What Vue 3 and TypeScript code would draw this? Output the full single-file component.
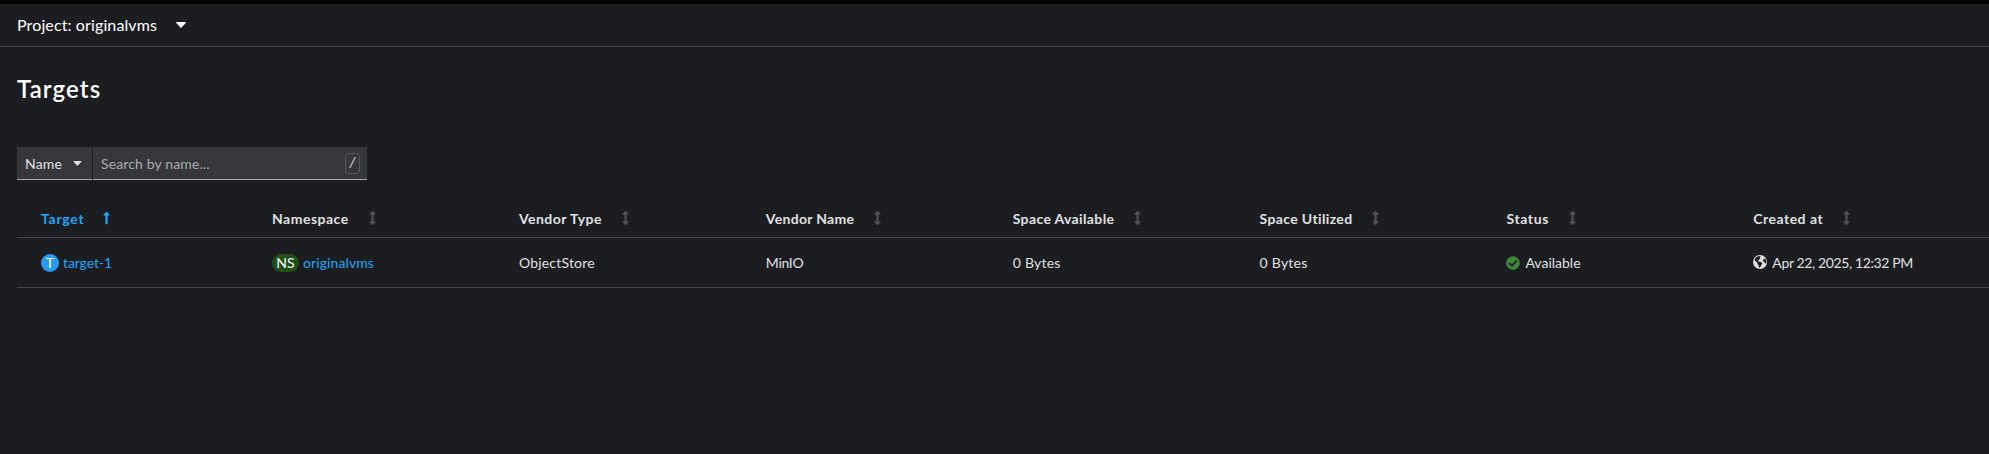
<script setup lang="ts">
interface Column {
  key: string
  label: string
  sorted?: boolean
}

const columns: Column[] = [
  { key: 'target', label: 'Target', sorted: true },
  { key: 'namespace', label: 'Namespace' },
  { key: 'vendor-type', label: 'Vendor Type' },
  { key: 'vendor-name', label: 'Vendor Name' },
  { key: 'available', label: 'Space Available' },
  { key: 'utilized', label: 'Space Utilized' },
  { key: 'status', label: 'Status' },
  { key: 'created', label: 'Created at' },
]

const targets = [
  {
    name: 'target-1',
    namespace: 'originalvms',
    vendorType: 'ObjectStore',
    vendorName: 'MinIO',
    available: '0 Bytes',
    utilized: '0 Bytes',
    status: 'Available',
    created: 'Apr 22, 2025, 12:32 PM',
  },
]

const arrowUp =
  'M88 166.059V468c0 6.627 5.373 12 12 12h56c6.627 0 12-5.373 12-12V166.059h46.059c21.382 0 32.09-25.851 16.971-40.971l-86.059-86.059c-9.373-9.373-24.569-9.373-33.941 0l-86.059 86.059c-15.119 15.119-4.411 40.971 16.971 40.971H88z'
const arrowBoth =
  'M214.059 377.941H168V134.059h46.059c21.382 0 32.09-25.851 16.971-40.971L144.971 7.029c-9.373-9.373-24.568-9.373-33.941 0L24.971 93.088c-15.119 15.119-4.411 40.971 16.971 40.971H88v243.882H41.941c-21.382 0-32.09 25.851-16.971 40.971l86.059 86.059c9.373 9.373 24.568 9.373 33.941 0l86.059-86.059c15.12-15.119 4.412-40.971-16.97-40.971z'
</script>

<template>
  <div class="page">
    <header class="project-bar">
      <button class="project" type="button">
        <span class="project-label">Project: originalvms</span>
        <svg class="caret" viewBox="0 0 10 6"><path d="M.7 0h8.6q.9.2.4 1L5.6 5.4q-.6.5-1.2 0L.3 1Q-.2.2.7 0z" /></svg>
      </button>
    </header>
    <h1 class="title">Targets</h1>
    <div class="toolbar">
      <button class="filter" type="button">
        <span class="filter-label">Name</span>
        <svg class="caret small" viewBox="0 0 10 6"><path d="M.7 0h8.6q.9.2.4 1L5.6 5.4q-.6.5-1.2 0L.3 1Q-.2.2.7 0z" /></svg>
      </button>
      <div class="search">
        <span class="placeholder">Search by name...</span>
        <kbd class="key">/</kbd>
      </div>
    </div>
    <div class="table">
      <div class="row head">
        <div v-for="c in columns" :key="c.key" class="cell" :class="{ sorted: c.sorted }">
          <span :class="'h-' + c.key">{{ c.label }}</span>
          <svg class="sort" viewBox="0 0 256 512"><path :d="c.sorted ? arrowUp : arrowBoth" /></svg>
        </div>
      </div>
      <div v-for="t in targets" :key="t.name" class="row body">
        <div class="cell"><span class="badge target">T</span><a class="link name">{{ t.name }}</a></div>
        <div class="cell"><span class="badge ns">NS</span><a class="link">{{ t.namespace }}</a></div>
        <div class="cell"><span class="type">{{ t.vendorType }}</span></div>
        <div class="cell"><span class="vendor">{{ t.vendorName }}</span></div>
        <div class="cell"><span class="bytes">{{ t.available }}</span></div>
        <div class="cell"><span class="bytes">{{ t.utilized }}</span></div>
        <div class="cell">
          <svg class="icon ok" viewBox="0 0 512 512">
            <path d="M504 256c0 136.967-111.033 248-248 248S8 392.967 8 256 119.033 8 256 8s248 111.033 248 248zM227.314 387.314l184-184c6.248-6.248 6.248-16.379 0-22.627l-22.627-22.627c-6.248-6.249-16.379-6.249-22.628 0L216 308.118l-70.059-70.059c-6.248-6.248-16.379-6.248-22.628 0l-22.627 22.627c-6.248 6.248-6.248 16.379 0 22.627l104 104c6.249 6.249 16.379 6.249 22.628.001z" />
          </svg>
          <span>{{ t.status }}</span>
        </div>
        <div class="cell">
          <svg class="icon globe" viewBox="0 0 14 14">
            <circle cx="7" cy="7" r="7" />
            <path class="land" d="M2.1 3.6 4 1.7l2.2-.6 1.5.7-1 .9.7.8-1.5 1.2-1 1.2.8.7 2.4.5 1.2 1.3-1.2 2-1.1 2.2-1-.2-.4-2.2-1.3-1.5.2-1.2L2.600 6.300 1.600 5z" />
            <path class="land" d="m10.400 3.900 1.700-.5 1.100 2.300-.1 2.300-1.100.5-.6-1.500-1.300-.8z" />
          </svg>
          <span class="date">{{ t.created }}</span>
        </div>
      </div>
    </div>
  </div>
</template>

<style>
body {
  background: #1b1d21;
}
</style>

<style scoped>
.page {
  box-sizing: border-box;
  height: 454px;
  overflow: hidden;
  border-top: 4px solid #030303;
  background: #1b1d21;
  color: #e0e0e0;
  font: 14px/21px Lato, "Open Sans", sans-serif;
  font-kerning: normal;
}
.project-bar {
  box-sizing: border-box;
  height: 43px;
  padding: 9px 17px 0;
  border-bottom: 1px solid #444548;
}
button {
  border: 0;
  background: none;
  color: inherit;
  font: inherit;
  padding: 0;
}
.project {
  display: flex;
  align-items: center;
  height: 24px;
  gap: 19px;
  font-size: 16px;
  line-height: 24px;
  color: #fff;
}
.project-label {
  letter-spacing: 0.12px;
}
.caret {
  width: 10px;
  height: 6px;
  fill: currentColor;
}
.small {
  width: 9px;
  height: 5px;
}
.title {
  margin: 26px 0 0 17px;
  font-size: 24px;
  line-height: 31px;
  font-weight: 600;
  letter-spacing: 1.1px;
  color: #fff;
}
.toolbar {
  display: flex;
  gap: 1px;
  margin: 43px 0 0 17px;
}
.filter,
.search {
  box-sizing: border-box;
  display: flex;
  align-items: center;
  height: 33px;
  background: #36373a;
  border-bottom: 1px solid #aaabac;
}
.filter {
  width: 75px;
  padding: 1px 0 0 8px;
  gap: 11px;
}
.filter-label {
  letter-spacing: 0.15px;
}
.search {
  width: 274px;
  padding: 0 7px 0 8px;
  justify-content: space-between;
}
.placeholder {
  color: #aaabac;
  letter-spacing: 0.13px;
}
.key {
  box-sizing: border-box;
  width: 15px;
  height: 21px;
  border: 1px solid #57585a;
  border-radius: 3px;
  color: #c5c5c6;
  font: 14px/20px "Liberation Mono", monospace;
  text-align: center;
}
.table {
  margin: 18px 0 0 17px;
}
.row {
  display: grid;
  grid-template-columns: 231px repeat(7, 246.9px);
  padding-left: 24px;
  border-bottom: 1px solid #444548;
  overflow: hidden;
}
.cell {
  display: flex;
  align-items: center;
  white-space: nowrap;
}
.head {
  height: 39px;
  font-weight: 700;
}
.head .cell {
  height: 41px;
}
.sort {
  width: 7px;
  height: 14px;
  margin: 0 0 2px 20px;
  fill: #4f5255;
}
.sorted,
.sorted .sort {
  color: #1fa7f8;
  fill: #1fa7f8;
}
.sorted .sort {
  margin-left: 19px;
}
.h-target { letter-spacing: 0.75px; }
.h-namespace { letter-spacing: 0.5px; }
.h-vendor-type { letter-spacing: 0.47px; }
.h-vendor-name { letter-spacing: 0.3px; }
.h-available { letter-spacing: 0.37px; }
.h-utilized { letter-spacing: 0.36px; }
.h-status { letter-spacing: 0.6px; }
.h-created { letter-spacing: 0.48px; }
.body {
  height: 49px;
}
.body .cell {
  height: 49px;
}
.badge {
  height: 18px;
  border-radius: 9px;
  margin: 0 4px -1px 0;
  color: #fff;
  font-size: 14px;
  line-height: 18px;
  text-align: center;
}
.target {
  width: 18px;
  background: #2b9af3;
}
.ns {
  width: 27px;
  background: #1e4f18;
}
.link {
  color: #1fa7f8;
  letter-spacing: 0.1px;
}
.name { letter-spacing: -0.1px; }
.type { letter-spacing: 0.2px; }
.vendor { letter-spacing: -0.3px; }
.bytes { letter-spacing: 0.25px; }
.date { letter-spacing: -0.38px; }
.icon {
  width: 14px;
  height: 14px;
  margin: 0 5px -1px 0;
}
.ok {
  fill: #3e8635;
}
.globe {
  margin-bottom: 1px;
  fill: #e0e0e0;
}
.land {
  fill: #1b1d21;
}
</style>
